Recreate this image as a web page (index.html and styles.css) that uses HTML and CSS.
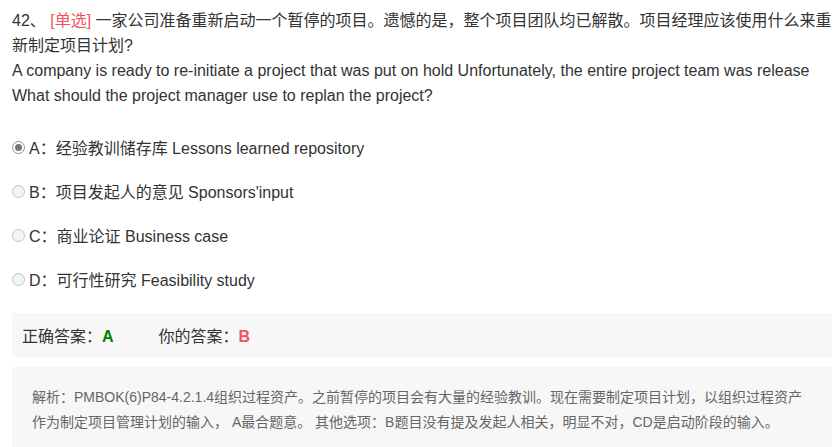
FILE: index.html
```html
<!DOCTYPE html>
<html lang="zh-CN">
<head>
<meta charset="utf-8">
<title>题目</title>
<link rel="stylesheet" href="styles.css">
</head>
<body>
<div class="page">
  <div class="question">
    <div>42、 <span class="tag">[单选]</span> 一家公司准备重新启动一个暂停的项目。遗憾的是，整个项目团队均已解散。项目经理应该使用什么来重<br>新制定项目计划?</div>
    <div>A company is ready to re-initiate a project that was put on hold Unfortunately, the entire project team was release<br>What should the project manager use to replan the project?</div>
  </div>
  <ul class="options">
    <li class="option"><span class="radio checked"></span>A：经验教训储存库 Lessons learned repository</li>
    <li class="option"><span class="radio"></span>B：项目发起人的意见 Sponsors'input</li>
    <li class="option"><span class="radio"></span>C：商业论证 Business case</li>
    <li class="option"><span class="radio"></span>D：可行性研究 Feasibility study</li>
  </ul>
  <div class="answer">
    <span>正确答案：<b class="right">A</b></span>
    <span>你的答案：<b class="wrong">B</b></span>
  </div>
  <div class="analysis">解析：PMBOK(6)P84-4.2.1.4组织过程资产。之前暂停的项目会有大量的经验教训。现在需要制定项目计划，以组织过程资产<br>作为制定项目管理计划的输入， A最合题意。 其他选项：B题目没有提及发起人相关，明显不对，CD是启动阶段的输入。</div>
</div>
</body>
</html>
```
FILE: styles.css
```css
html, body {
  margin: 0;
  padding: 0;
  background: #fff;
}
body {
  font-family: "Liberation Sans", Arial, "Noto Sans CJK SC", sans-serif;
  color: #333;
  font-size: 16px;
}
.page {
  width: 820px;
  padding: 8px 0 0 12px;
}
.question {
  line-height: 25px;
  white-space: nowrap;
}
.tag {
  color: #f4525b;
}
.options {
  list-style: none;
  margin: 17px 0 0;
  padding: 0;
}
.option {
  height: 44px;
  display: flex;
  align-items: center;
  gap: 4px;
}
.radio {
  width: 11px;
  height: 11px;
  border: 1px solid #c4c4c4;
  border-radius: 50%;
  background: #f4f4f4;
  display: inline-flex;
  align-items: center;
  justify-content: center;
  box-sizing: content-box;
}
.radio.checked {
  border-color: #8f8f8f;
  background: #fff;
}
.radio.checked::after {
  content: "";
  width: 7px;
  height: 7px;
  border-radius: 50%;
  background: #777;
}
.answer {
  margin-top: 12px;
  height: 44px;
  background: #f7f7f7;
  display: flex;
  align-items: center;
  padding-left: 10px;
  gap: 45px;
}
.answer b {
  font-weight: bold;
}
.right {
  color: #008000;
}
.wrong {
  color: #f5525a;
}
.analysis {
  margin-top: 10px;
  background: #f7f7f7;
  padding: 18px 20px 20px;
  font-size: 14px;
  line-height: 25px;
  color: #666;
  white-space: nowrap;
}
```
